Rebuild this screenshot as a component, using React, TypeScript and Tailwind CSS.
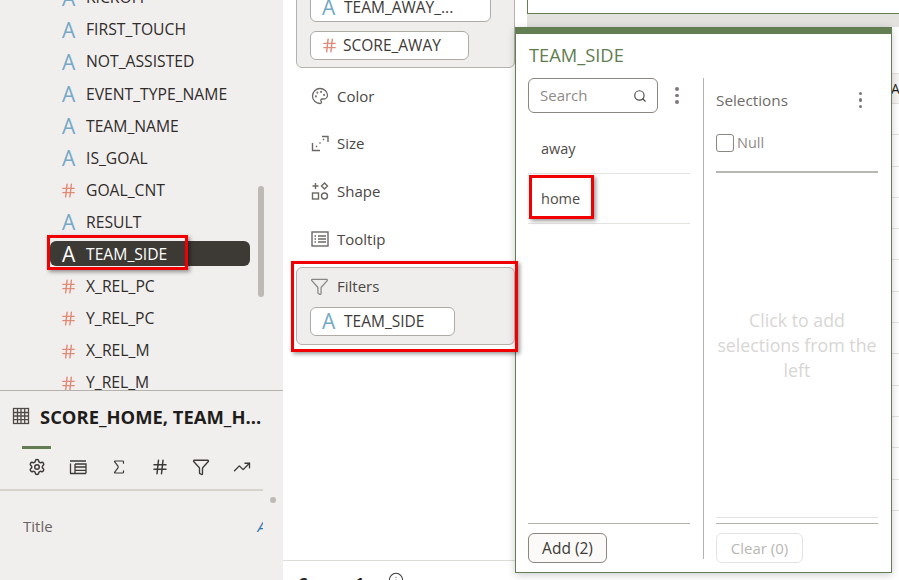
import { Hash, Info, Palette, Search, Settings, Sigma, Funnel, TrendingUp } from 'lucide-react';

type Field = { name: string; kind: 'text' | 'num' };

const fields: Field[] = [
  { name: 'KICKOFF', kind: 'text' },
  { name: 'FIRST_TOUCH', kind: 'text' },
  { name: 'NOT_ASSISTED', kind: 'text' },
  { name: 'EVENT_TYPE_NAME', kind: 'text' },
  { name: 'TEAM_NAME', kind: 'text' },
  { name: 'IS_GOAL', kind: 'text' },
  { name: 'GOAL_CNT', kind: 'num' },
  { name: 'RESULT', kind: 'text' },
  { name: 'TEAM_SIDE', kind: 'text' },
  { name: 'X_REL_PC', kind: 'num' },
  { name: 'Y_REL_PC', kind: 'num' },
  { name: 'X_REL_M', kind: 'num' },
  { name: 'Y_REL_M', kind: 'num' },
];

const tableRows = Array.from({ length: 13 });

function TypeIcon({ kind, active }: { kind: 'text' | 'num'; active?: boolean }) {
  if (kind === 'num') {
    return <Hash size={17} strokeWidth={2} className="w-[17px] shrink-0 -ml-[2px] mr-[9px] text-[#e08a78]" />;
  }
  return (
    <span className={`w-[24px] shrink-0 text-[21px] leading-none ${active ? 'text-white' : 'text-[#74a9c6]'}`}>
      A
    </span>
  );
}

function FieldChip({ label, kind, width }: { label: string; kind: 'text' | 'num'; width: string }) {
  return (
    <div className={`flex h-[29px] items-center rounded-md border border-[#aeaba7] bg-white pl-[11px] ${width}`}>
      {kind === 'num' ? (
        <Hash size={17} strokeWidth={2} className="-ml-[1px] mr-[5px] w-[17px] text-[#e08a78]" />
      ) : (
        <span className="w-[22px] text-[21px] leading-none text-[#74a9c6]">A</span>
      )}
      <span className="mt-[1px] text-[15.5px] text-[#3d3a37]">{label}</span>
    </div>
  );
}

function Kebab() {
  return (
    <div className="flex flex-col gap-[3px]">
      <span className="h-[3.5px] w-[3.5px] rounded-full bg-[#7d7a76]" />
      <span className="h-[3.5px] w-[3.5px] rounded-full bg-[#7d7a76]" />
      <span className="h-[3.5px] w-[3.5px] rounded-full bg-[#7d7a76]" />
    </div>
  );
}

function TableIcon() {
  return (
    <svg width="18" height="18" viewBox="0 0 18 18" fill="none" stroke="#4f4c48" strokeWidth="1.3" className="shrink-0">
      <rect x="1.5" y="1.5" width="15" height="15" />
      <path d="M1.5 5.5h15M1.5 9h15M1.5 12.7h15M5.5 1.5v15M9 1.5v15M12.7 1.5v15" />
    </svg>
  );
}

function RowsIcon() {
  return (
    <svg width="18" height="18" viewBox="0 0 18 18" fill="none" stroke="#3d3a37" strokeWidth="1.3">
      <path d="M1 3h16M1.5 5.5v10M1 15.5h16M6 6h11v9.5M6 6v9.5M6 9h11M6 12.3h11" />
    </svg>
  );
}

function SizeIcon() {
  return (
    <svg width="18" height="18" viewBox="0 0 18 18" fill="none" stroke="#6b6864" strokeWidth="1.4" className="shrink-0">
      <path d="M1.5 9v7.5H9M11 2.5h6V8M5 13l1-1M8.5 9.5l1-1M12 6l1-1" />
    </svg>
  );
}

function ShapeIcon() {
  return (
    <svg width="18" height="18" viewBox="0 0 18 18" fill="none" stroke="#6b6864" strokeWidth="1.4" className="shrink-0">
      <path d="M4.5 1v6M1.5 4h6" />
      <path d="M13.5 1l3 3-3 3-3-3z" />
      <rect x="1.5" y="11" width="6" height="6" />
      <circle cx="13.5" cy="14" r="3" />
    </svg>
  );
}

function TooltipIcon() {
  return (
    <svg width="18" height="18" viewBox="0 0 18 18" fill="none" stroke="#6b6864" strokeWidth="1.4" className="shrink-0">
      <rect x="1" y="2" width="16" height="14" />
      <path d="M7 6h8M7 9h8M7 12h8M3.5 6h1.5M3.5 9h1.5M3.5 12h1.5" />
    </svg>
  );
}

function RedMark({ className }: { className: string }) {
  return (
    <div className={`absolute border-[3px] border-[#f00000] shadow-[2px_2px_4px_rgba(0,0,0,0.4)] ${className}`} />
  );
}

function PropertyRow({ icon, label }: { icon: React.ReactNode; label: string }) {
  return (
    <div className="flex h-[47.67px] items-center gap-[8px] pl-[28px] text-[15px] text-[#4a4744]">
      {icon}
      <span>{label}</span>
    </div>
  );
}

export default function App() {
  return (
    <div className="relative flex h-[580px] w-[899px] overflow-hidden bg-white font-['Open_Sans',sans-serif]">
      {/* Data panel */}
      <aside className="flex h-full w-[283px] shrink-0 flex-col bg-[#f1efee]">
        <div className="flex h-[391px] shrink-0 overflow-hidden border-b border-[#b5b2ae]">
          <div className="-mt-[18px] w-[258px] shrink-0">
            {fields.map((field) =>
              field.name === 'TEAM_SIDE' ? (
                <div key={field.name} className="flex h-[32.1px] items-center pl-[50px]">
                  <div className="mb-[2px] flex h-[25px] w-[200px] items-center rounded-md bg-[#3d3a35] pl-[12px] pt-[1px] text-[15.7px] text-white">
                    <TypeIcon kind="text" active />
                    {field.name}
                  </div>
                </div>
              ) : (
                <div key={field.name} className="flex h-[32.1px] items-center pl-[62px] text-[15.7px] text-[#2f2c2a]">
                  <TypeIcon kind={field.kind} />
                  {field.name}
                </div>
              ),
            )}
          </div>
          <div className="mt-[186px] h-[111px] w-[6px] rounded-sm bg-[#bdb9b4]" />
        </div>

        <div className="flex h-[55px] items-start gap-[10px] pl-[12px] pt-[16px]">
          <TableIcon />
          <span className="-mt-[2px] text-[18.4px] leading-[24px] font-bold whitespace-nowrap text-[#1f1d1b]">SCORE_HOME, TEAM_H...</span>
        </div>

        <div className="ml-[22px] h-[3px] w-[29px] bg-[#637e52]" />
        <div className="flex h-[42px] w-[263px] items-center border-b-2 border-[#d6d3cd] pb-[4px] pl-[28px]">
          <div className="flex items-center gap-[23px] text-[#3d3a37]">
            <Settings size={18} strokeWidth={2} />
            <RowsIcon />
            <Sigma size={18} strokeWidth={1.6} />
            <Hash size={18} strokeWidth={2} />
            <Funnel size={18} strokeWidth={1.8} />
            <TrendingUp size={18} strokeWidth={1.8} />
          </div>
        </div>

        <div className="flex">
          <div className="flex w-[263px] overflow-hidden pl-[23px] pt-[24px] text-[15px] text-[#6b6360]">
            <span>Title</span>
            <span className="ml-auto -mr-[3px] text-[#2a78b0] italic">A</span>
          </div>
          <span className="ml-[7px] mt-[6px] h-[6px] w-[6px] rounded-full bg-[#bdb9b4]" />
        </div>
      </aside>

      {/* Grammar column */}
      <section className="flex h-full w-[244px] shrink-0 flex-col overflow-hidden">
        <div className="ml-[13px] -mt-[8px] flex h-[76px] w-[219px] shrink-0 flex-col gap-[9px] rounded-b-md border border-[#b5b2ae] bg-[#efeeec] pl-[13px]">
          <FieldChip label="TEAM_AWAY_..." kind="text" width="w-[181px]" />
          <FieldChip label="SCORE_AWAY" kind="num" width="w-[159px]" />
        </div>

        <div className="mt-[4px]">
          <PropertyRow icon={<Palette size={18} strokeWidth={1.7} className="shrink-0 text-[#6b6864]" />} label="Color" />
          <PropertyRow icon={<SizeIcon />} label="Size" />
          <PropertyRow icon={<ShapeIcon />} label="Shape" />
          <PropertyRow icon={<TooltipIcon />} label="Tooltip" />
        </div>

        <div className="ml-[13px] mt-[4px] h-[78px] w-[219px] shrink-0 rounded-md border border-[#b5b2ae] bg-[#efeeec] pl-[13px]">
          <div className="flex h-[39px] items-center gap-[8px] pb-[1px] text-[15px] text-[#4a4744]">
            <Funnel size={19} strokeWidth={1.6} className="text-[#8a8682]" />
            Filters
          </div>
          <FieldChip label="TEAM_SIDE" kind="text" width="w-[145px]" />
        </div>

        <div className="mt-auto h-[20px] shrink-0 overflow-hidden border-t border-[#dedcd7] pl-[15px]">
          <div className="flex items-start pt-[11px]">
            <span className="w-[90px] text-[15px] leading-[20px] font-bold whitespace-nowrap text-[#1f1d1b]">Canvas 1</span>
            <Info size={16} strokeWidth={1.6} className="text-[#3d3a37]" />
          </div>
        </div>
      </section>

      {/* Table preview behind the picker */}
      <main className="flex min-w-0 flex-1 flex-col">
        <div className="h-[14px] shrink-0 border-b border-l border-[#637e52]" />
        <div className="h-[13px] shrink-0 bg-[#e3e2de]" />
        <div className="mt-[46px]">
          <div className="flex h-[31px] items-center justify-end border-y border-[#e5e3e0] bg-[#f6f5f3] text-[14px] text-[#1f1d1b]">
            <span className="-mr-[1px] w-[9px] overflow-hidden">A</span>
          </div>
          {tableRows.map((_, i) => (
            <div key={i} className="h-[31.3px] border-b border-[#e5e3e0]" />
          ))}
        </div>
      </main>

      {/* Value picker */}
      <div className="absolute left-[515px] top-[27px] h-[546px] w-[377px] border-x border-b border-t-[7px] border-[#637e52] bg-white shadow-[0_2px_8px_rgba(0,0,0,0.2)]">
        <div className="flex h-[44px] items-center pb-[2px] pl-[13px] text-[18.3px] text-[#5f7d4f]">TEAM_SIDE</div>

        <div className="flex">
          <div className="ml-[12px] flex h-[485px] w-[162px] shrink-0 flex-col">
            <div className="flex items-center">
              <div className="flex h-[35px] w-[130px] items-center justify-between rounded-md border border-[#8a8680] pl-[11px] pr-[10px] text-[15px] text-[#8f8b87]">
                Search
                <Search size={14} strokeWidth={2} className="text-[#4f4c48]" />
              </div>
              <div className="ml-[17px]">
                <Kebab />
              </div>
            </div>
            <div className="mt-[11px] text-[14.5px] text-[#4f4c48]">
              <div className="flex h-[50px] items-center border-b border-[#e5e3e0] pl-[13px]">away</div>
              <div className="flex h-[50px] items-center border-b border-[#e5e3e0] pl-[13px]">home</div>
            </div>
            <div className="mt-auto border-t border-[#b5b2ae] pt-[9px]">
              <button className="h-[30px] w-[79px] rounded-md border border-[#8a8680] bg-[#fbfaf9] pt-[1px] text-[15.5px] text-[#3d3a37]">Add (2)</button>
            </div>
          </div>

          <div className="ml-[13px] h-[481px] w-px shrink-0 bg-[#b5b2ae]" />

          <div className="ml-[12px] flex h-[485px] w-[162px] shrink-0 flex-col">
            <div className="flex h-[44px] items-center justify-between pr-[16px] text-[15.3px] text-[#6f6b68]">
              Selections
              <Kebab />
            </div>
            <div className="flex h-[42px] items-center gap-[3px] text-[14.5px] text-[#8f8b87]">
              <span className="h-[18px] w-[18px] rounded-[3px] border border-[#8a8680]" />
              Null
            </div>
            <div className="mt-[7px] h-[2px] bg-[#b9b7b4]" />
            <div className="flex flex-1 items-center justify-center text-center text-[17.8px] leading-[25px] text-[#d8d6d4]">
              Click to add
              <br />
              selections from the
              <br />
              left
            </div>
            <div className="h-[7px] border-y border-t-[#e5e3e0] border-b-[#b5b2ae]" />
            <div className="pt-[9px]">
              <button className="h-[30px] w-[87px] rounded-md border border-[#e5e3e0] text-[15px] text-[#b9b7b4]">Clear (0)</button>
            </div>
          </div>
        </div>
      </div>

      {/* Red callouts from the screenshot */}
      <RedMark className="left-[47px] top-[235px] h-[35px] w-[141px]" />
      <RedMark className="left-[291px] top-[261px] h-[91px] w-[227px]" />
      <RedMark className="left-[529px] top-[175px] h-[44px] w-[65px]" />
    </div>
  );
}
